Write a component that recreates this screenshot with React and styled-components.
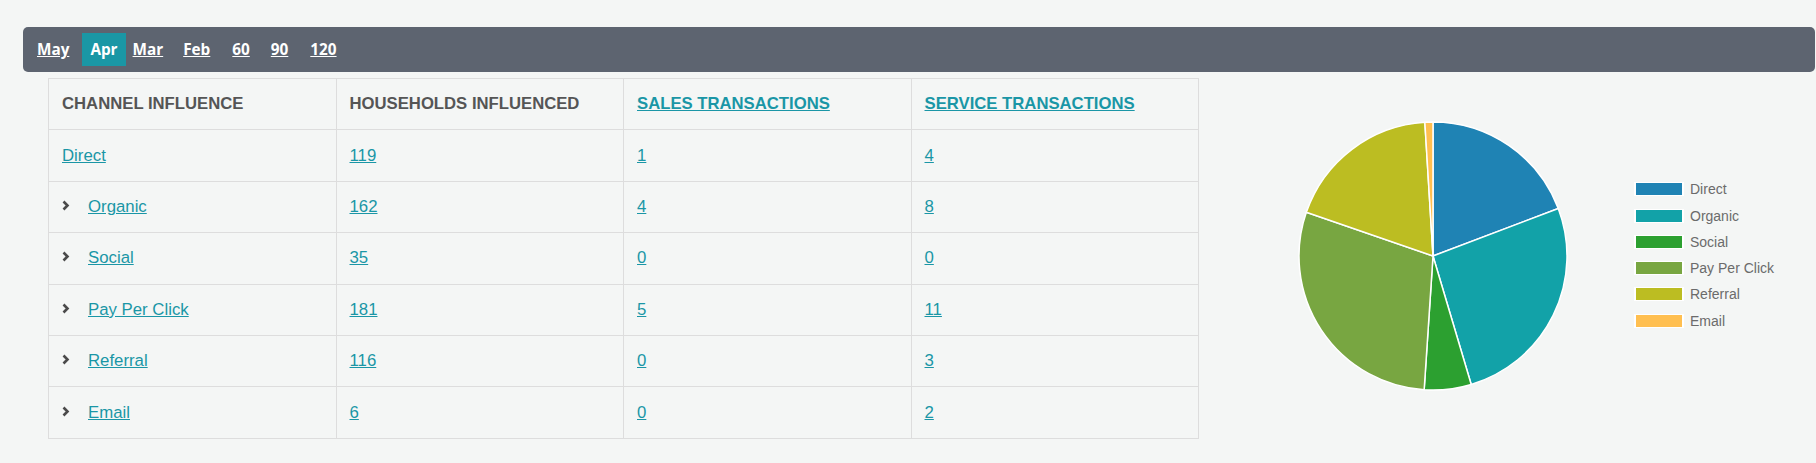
import styled, { createGlobalStyle } from "styled-components";

const GlobalStyle = createGlobalStyle`
  body {
    margin: 0;
    background-color: #f4f6f5;
    font-family: "Liberation Sans", Arial, sans-serif;
  }
`;

const channels = [
  { name: "Direct", households: 119, sales: 1, service: 4, color: "#1f83b4", expandable: false },
  { name: "Organic", households: 162, sales: 4, service: 8, color: "#12a2a8", expandable: true },
  { name: "Social", households: 35, sales: 0, service: 0, color: "#2ca030", expandable: true },
  { name: "Pay Per Click", households: 181, sales: 5, service: 11, color: "#78a641", expandable: true },
  { name: "Referral", households: 116, sales: 0, service: 3, color: "#bcbd22", expandable: true },
  { name: "Email", households: 6, sales: 0, service: 2, color: "#ffbf50", expandable: true },
];

const periods = [
  { label: "May", gap: 6 },
  { label: "Apr", gap: 0, active: true },
  { label: "Mar", gap: 6 },
  { label: "Feb", gap: 8 },
  { label: "60", gap: 7 },
  { label: "90", gap: 8 },
  { label: "120", gap: 8 },
];

const Page = styled.div`
  padding: 27px 0 0 23px;
`;
const Toolbar = styled.div`
  height: 45px;
  margin-right: 1px;
  background-color: #5d6470;
  border-radius: 5px;
  display: flex;
  align-items: center;
  padding-left: 7px;
`;
const PeriodLink = styled.a`
  display: block;
  height: 33px;
  line-height: 33px;
  padding: 0 ${(props) => (props.$active ? "8px" : "7px")};
  margin-right: ${(props) => props.$gap}px;
  font-family: "Open Sans", sans-serif;
  font-weight: 700;
  font-size: 15.3px;
  color: #fff;
  text-decoration: ${(props) => (props.$active ? "none" : "underline")};
  background-color: ${(props) => (props.$active ? "#1a97a5" : "transparent")};
  cursor: pointer;
`;
const Content = styled.div`
  display: flex;
  align-items: flex-start;
  margin-top: 6px;
  padding-left: 25px;
`;
const Table = styled.table`
  width: 1151px;
  border-collapse: collapse;
  flex-shrink: 0;
`;
const HeadCell = styled.th`
  height: 50.4px;
  padding: 0 13px;
  border: 1px solid #dddddd;
  text-align: left;
  font-size: 16.7px;
  font-weight: 700;
  color: #555;
  width: 25%;
`;
const Cell = styled.td`
  height: 50.4px;
  padding: 0 13px;
  border: 1px solid #dddddd;
  font-size: 16.8px;
  color: #555;
`;
const TableLink = styled.a`
  color: #1a96a6;
  text-decoration: underline;
  cursor: pointer;
`;
const Expander = styled.svg`
  width: 8px;
  height: 11px;
  margin-right: 18px;
  vertical-align: middle;
  position: relative;
  top: -2px;
`;
const ChartArea = styled.div`
  display: flex;
  align-items: center;
  margin-left: 99px;
  margin-top: 43px;
`;
const Legend = styled.div`
  display: flex;
  flex-direction: column;
  margin-left: 66px;
  margin-top: -2px;
`;
const LegendRow = styled.div`
  display: flex;
  align-items: center;
  height: 26.3px;
`;
const Swatch = styled.div`
  width: 46px;
  height: 12px;
  border: solid #fff;
  border-width: 1px 2px;
  background-color: ${(props) => props.$color};
  margin-right: 6px;
`;
const LegendLabel = styled.span`
  font-size: 14px;
  color: #6b6b6b;
`;

function PieChart({ data, radius }) {
  const total = data.reduce((s, d) => s + d.households, 0);
  const c = radius + 1;
  let start = 0;
  const point = (a) => [c + radius * Math.sin(a), c - radius * Math.cos(a)];
  return (
    <svg width={c * 2} height={c * 2} viewBox={`0 0 ${c * 2} ${c * 2}`}>
      {data.map((d) => {
        const angle = (d.households / total) * Math.PI * 2;
        const [x1, y1] = point(start);
        const [x2, y2] = point(start + angle);
        const large = angle > Math.PI ? 1 : 0;
        start += angle;
        return (
          <path
            key={d.name}
            d={`M${c},${c} L${x1},${y1} A${radius},${radius} 0 ${large} 1 ${x2},${y2} Z`}
            fill={d.color}
            stroke="#fff"
            strokeWidth="1.5"
            strokeLinejoin="round"
          />
        );
      })}
    </svg>
  );
}

function Chevron() {
  return (
    <Expander viewBox="0 0 8 11">
      <polyline points="1.5,1.5 5.5,5.5 1.5,9.5" fill="none" stroke="#4a4a4a" strokeWidth="2.6" />
    </Expander>
  );
}

export default function App() {
  return (
    <Page>
      <GlobalStyle />
      <Toolbar>
        {periods.map((p) => (
          <PeriodLink key={p.label} $active={p.active} $gap={p.gap}>
            {p.label}
          </PeriodLink>
        ))}
      </Toolbar>
      <Content>
        <Table>
          <thead>
            <tr>
              <HeadCell>CHANNEL INFLUENCE</HeadCell>
              <HeadCell>HOUSEHOLDS INFLUENCED</HeadCell>
              <HeadCell>
                <TableLink>SALES TRANSACTIONS</TableLink>
              </HeadCell>
              <HeadCell>
                <TableLink>SERVICE TRANSACTIONS</TableLink>
              </HeadCell>
            </tr>
          </thead>
          <tbody>
            {channels.map((ch) => (
              <tr key={ch.name}>
                <Cell>
                  {ch.expandable && <Chevron />}
                  <TableLink>{ch.name}</TableLink>
                </Cell>
                <Cell>
                  <TableLink>{ch.households}</TableLink>
                </Cell>
                <Cell>
                  <TableLink>{ch.sales}</TableLink>
                </Cell>
                <Cell>
                  <TableLink>{ch.service}</TableLink>
                </Cell>
              </tr>
            ))}
          </tbody>
        </Table>
        <ChartArea>
          <PieChart data={channels} radius={134} />
          <Legend>
            {channels.map((ch) => (
              <LegendRow key={ch.name}>
                <Swatch $color={ch.color} />
                <LegendLabel>{ch.name}</LegendLabel>
              </LegendRow>
            ))}
          </Legend>
        </ChartArea>
      </Content>
    </Page>
  );
}
